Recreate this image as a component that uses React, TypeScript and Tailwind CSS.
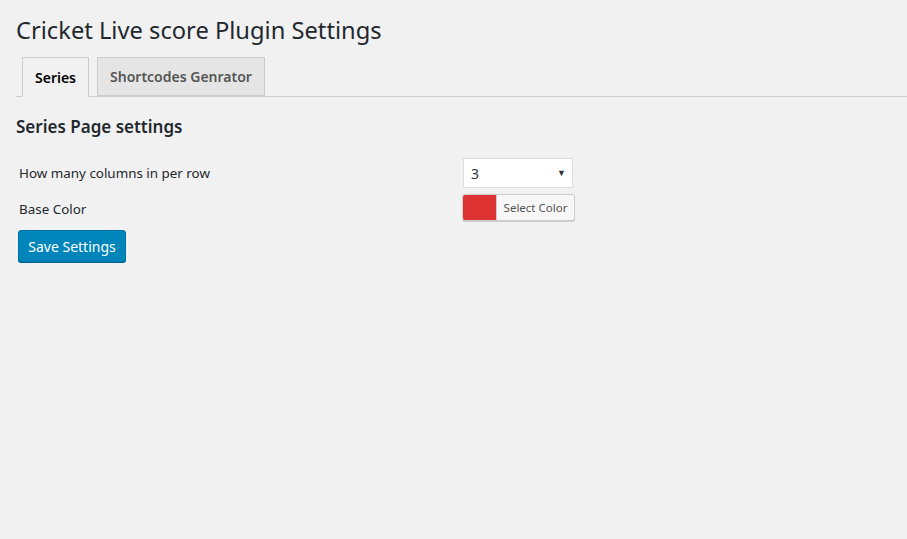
import { useState } from "react";

export default function App() {
  const [tab, setTab] = useState<"series" | "shortcodes">("series");
  const [columns, setColumns] = useState("3");

  const activeTab =
    "-mb-px h-[40px] px-[12px] border border-[#ccc] border-b-[#f1f1f1] bg-[#f1f1f1] text-[14px] font-semibold text-[#000]";
  const idleTab =
    "h-[39px] px-[12px] border border-[#ccc] bg-[#e5e5e5] text-[14px] font-semibold text-[#555]";

  return (
    <div
      className="min-h-[539px] bg-[#f1f1f1] text-[#23282d] text-[14px]"
      style={{ fontFamily: '"Noto Sans", "Open Sans", sans-serif' }}
    >
      <div className="pl-4 pt-[16px]">
        {/* Title */}
        <h1 className="text-[23.7px] font-normal leading-[29px] text-[#23282d]">
          Cricket Live score Plugin Settings
        </h1>

        {/* Tabs */}
        <div className="mt-[12px] flex items-end gap-[8px] border-b border-[#ccc] pl-[6px]">
          <button onClick={() => setTab("series")} className={tab === "series" ? activeTab : idleTab}>
            Series
          </button>
          <button onClick={() => setTab("shortcodes")} className={tab === "shortcodes" ? activeTab : idleTab}>
            Shortcodes Genrator
          </button>
        </div>

        {/* Section */}
        <h2 className="mt-[18px] text-[17px] font-semibold leading-[23px] text-[#23282d]">
          Series Page settings
        </h2>

        <div className="mt-[20px] grid grid-cols-[444px_auto] items-center gap-y-[6px] pl-[3px]">
          <label className="text-[13.4px] text-[#23282d]">How many columns in per row</label>
          <div className="relative h-[30px] w-[110px]">
            <select
              value={columns}
              onChange={(e) => setColumns(e.target.value)}
              className="h-full w-full appearance-none border border-[#ddd] bg-white pl-[7px] text-[14px] text-[#32373c] outline-none"
            >
              <option value="1">1</option>
              <option value="2">2</option>
              <option value="3">3</option>
              <option value="4">4</option>
            </select>
            <span className="pointer-events-none absolute right-[7px] top-[8px] text-[9px] text-[#333]">▼</span>
          </div>

          <label className="translate-y-[2px] text-[13.4px] text-[#23282d]">Base Color</label>
          <button className="-ml-px flex h-[27px] w-[113px] items-stretch overflow-hidden rounded-[3px] border border-[#ccc] bg-[#f7f7f7] shadow-[0_1px_0_#ccc]">
            <span className="w-[33px] bg-[#dd3333]" />
            <span className="flex flex-1 items-center justify-center border-l border-[#ccc] text-[11.5px] text-[#555]">
              Select Color
            </span>
          </button>
        </div>

        <button className="ml-[2px] mt-[9px] h-[32px] w-[108px] rounded-[3px] border border-[#0073aa] bg-[#0085ba] text-[14px] text-white shadow-[0_1px_0_#006799]">
          Save Settings
        </button>
      </div>
    </div>
  );
}
